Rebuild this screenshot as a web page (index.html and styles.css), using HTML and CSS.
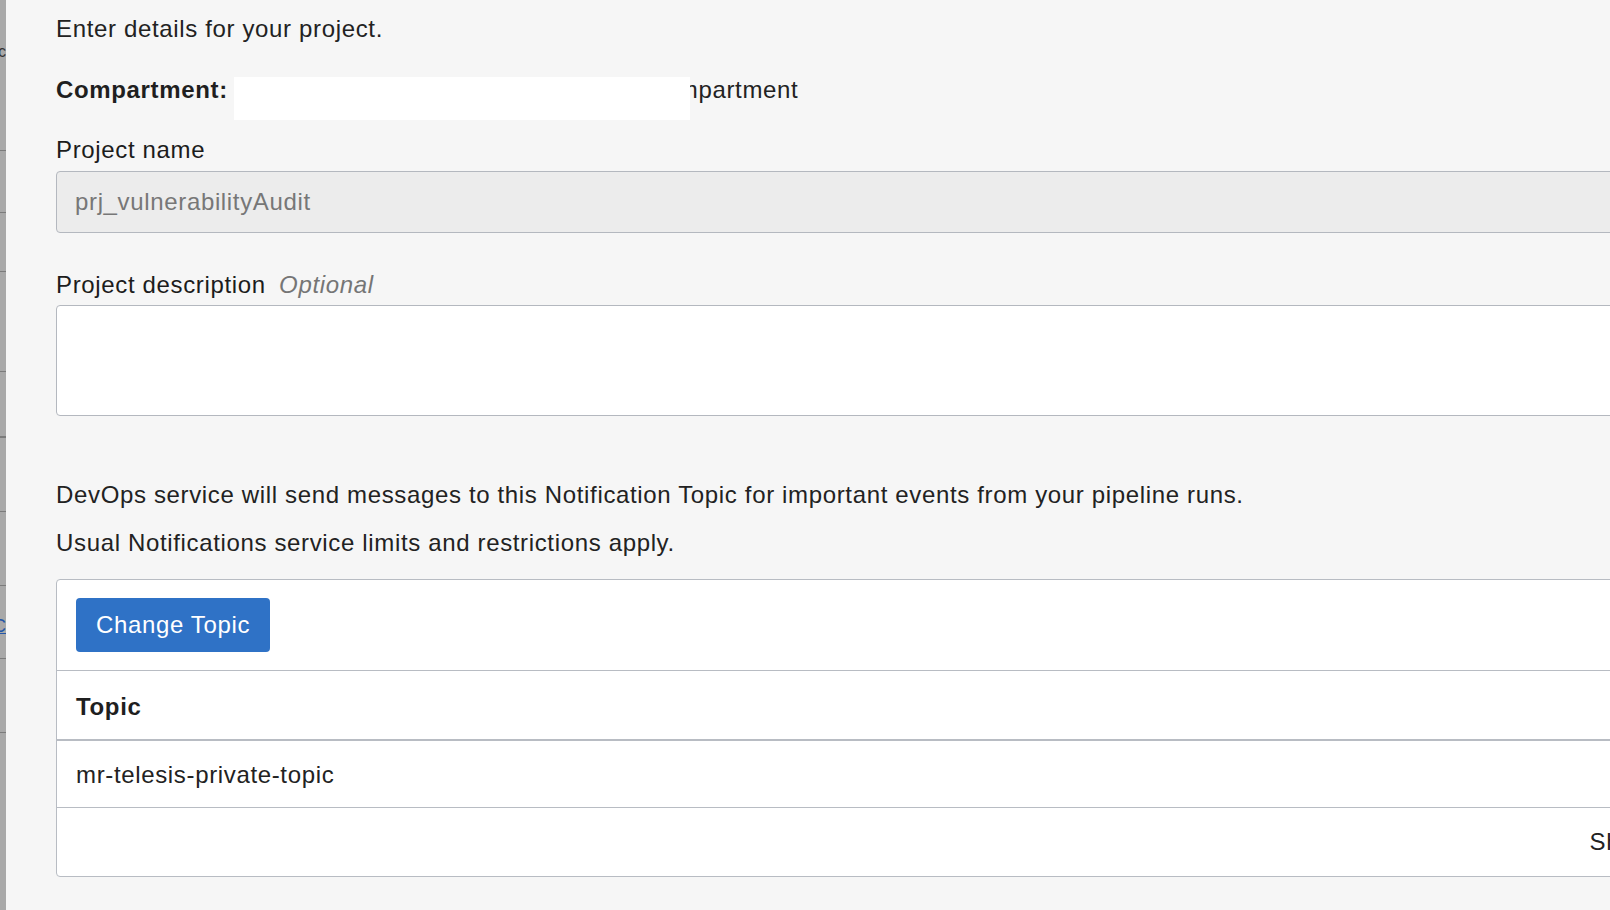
FILE: index.html
```html
<!DOCTYPE html>
<html lang="en">
<head>
<meta charset="utf-8">
<title>Create project</title>
<link rel="stylesheet" href="styles.css">
</head>
<body>
  <div class="strip" aria-hidden="true">
    <div class="strip-row r1"><span class="frag">Basic</span></div>
    <div class="strip-row r2"></div>
    <div class="strip-row r3"></div>
    <div class="strip-row r4"></div>
    <div class="strip-row r5"></div>
    <div class="strip-row r6"></div>
    <div class="strip-row r7"></div>
    <div class="strip-row r8"><span class="frag link">C</span></div>
    <div class="strip-row r9"></div>
  </div>

  <main class="main">
    <p class="intro">Enter details for your project.</p>

    <div class="compartment">
      <span class="comp-label">Compartment:</span>
      <span class="redact"></span>
      <span class="comp-value">mpartment</span>
    </div>

    <div class="field field-name">
      <label class="label" for="pname">Project name</label>
      <input id="pname" class="input" type="text" value="prj_vulnerabilityAudit" readonly>
    </div>

    <div class="field field-desc">
      <label class="label" for="pdesc">Project description <span class="optional">Optional</span></label>
      <textarea id="pdesc" class="textarea"></textarea>
    </div>

    <p class="note note-first">DevOps service will send messages to this Notification Topic for important events from your pipeline runs.</p>
    <p class="note note-second">Usual Notifications service limits and restrictions apply.</p>

    <section class="panel">
      <div class="toolbar">
        <button class="btn" type="button">Change Topic</button>
      </div>
      <div class="row row-head">Topic</div>
      <div class="row row-data">mr-telesis-private-topic</div>
      <div class="row row-foot">Showing 1 Item</div>
    </section>
  </main>
</body>
</html>
```

FILE: styles.css
```css
html, body {
  margin: 0;
  height: 100%;
  overflow: hidden;
}

body {
  background: #f6f6f6;
  font-family: "Liberation Sans", Arial, Helvetica, sans-serif;
  font-size: 24px;
  letter-spacing: 0.65px;
  color: #222222;
  display: flex;
  align-items: flex-start;
}

/* underlying page peeking out on the left */
.strip {
  width: 6px;
  flex: none;
  height: 910px;
  background: #a9a9a9;
  overflow: hidden;
}

.strip-row {
  display: flex;
  justify-content: flex-end;
  align-items: center;
  border-bottom: 1px solid #7c7c7c;
  box-sizing: border-box;
  font-size: 16px;
  letter-spacing: 0;
  color: #333;
  white-space: nowrap;
}

.r1 { height: 151px; align-items: flex-start; padding-top: 43px; }
.r2 { height: 62px; }
.r3 { height: 59px; }
.r4 { height: 100px; }
.r5 { height: 66px; border-bottom-width: 2px; }
.r6 { height: 74px; }
.r7 { height: 74px; }
.r8 { height: 73px; align-items: flex-start; padding-top: 30px; }
.r9 { height: 74px; }

.frag { flex: none; }
.frag.link { color: #2456a8; text-decoration: underline; font-size: 18px; }

/* main form */
.main {
  flex: none;
  width: 1728px;
  padding: 14px 0 0 50px;
}

.intro {
  margin: 0;
  line-height: 30px;
}

.compartment {
  margin-top: 31px;
  display: flex;
  align-items: flex-start;
  line-height: 30px;
  height: 45px;
}

.comp-label {
  font-weight: bold;
  color: #1f1f1f;
}

.redact {
  width: 456px;
  height: 43px;
  margin: 2px -12px 0 6px;
  background: #ffffff;
  position: relative;
  z-index: 1;
}

.field {
  display: flex;
  flex-direction: column;
}

.field-name { margin-top: 15px; }
.field-desc { margin-top: 37px; }

.label {
  line-height: 30px;
  color: #1c1c1c;
}

.optional {
  font-style: italic;
  color: #757575;
  margin-left: 6px;
}

.input {
  margin: 6px 0 0;
  box-sizing: border-box;
  height: 62px;
  width: 100%;
  padding: 0 18px;
  border: 1px solid #b4b8bf;
  border-radius: 4px;
  background: #ececec;
  color: #777777;
  font: inherit;
  letter-spacing: inherit;
  outline: none;
}

.textarea {
  display: block;
  margin: 5px 0 0;
  box-sizing: border-box;
  height: 111px;
  width: 100%;
  border: 1px solid #b4b8bf;
  border-radius: 4px;
  background: #ffffff;
  resize: none;
  font: inherit;
  outline: none;
}

.note {
  margin: 0;
  line-height: 30px;
}

.note-first { margin-top: 64px; }
.note-second { margin-top: 18px; }

.panel {
  margin-top: 21px;
  background: #ffffff;
  border: 1px solid #b8bcc3;
  border-radius: 4px;
}

.toolbar {
  padding: 18px 19px 18px;
  border-bottom: 1px solid #b8bcc3;
}

.btn {
  display: block;
  height: 54px;
  padding: 0 20px;
  border: none;
  border-radius: 4px;
  background: #2f72c6;
  color: #ffffff;
  font: inherit;
  letter-spacing: inherit;
  cursor: pointer;
}

.row {
  display: flex;
  align-items: center;
  box-sizing: border-box;
  padding: 0 19px;
  line-height: 30px;
}

.row-head {
  height: 70px;
  padding-top: 3px;
  font-weight: bold;
  color: #1f1f1f;
  border-bottom: 2px solid #b8bcc3;
}

.row-data {
  height: 67px;
  padding-top: 1px;
  border-bottom: 1px solid #b8bcc3;
}

.row-foot {
  height: 68px;
  justify-content: flex-end;
}
```
